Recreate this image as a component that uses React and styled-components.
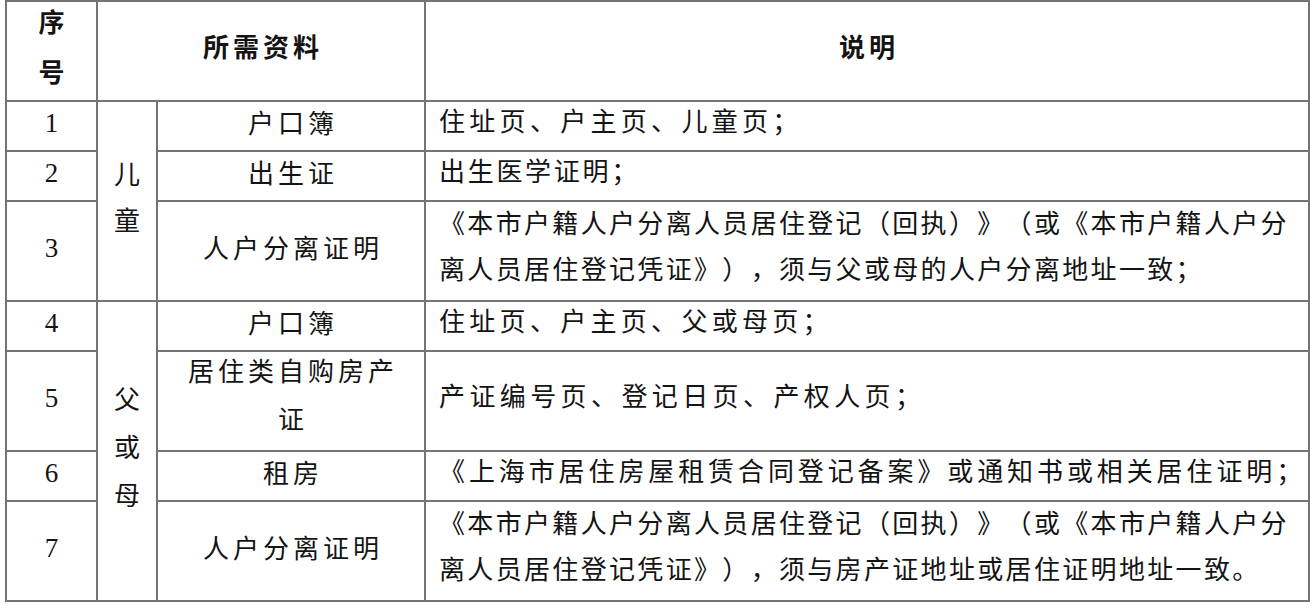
import React from 'react';
import styled, { createGlobalStyle } from 'styled-components';

const GlobalStyle = createGlobalStyle`
    html, body {
        margin: 0;
        padding: 0;
        background: #ffffff;
    }
    body {
        font-family: "Noto Sans CJK SC", "Noto Sans", sans-serif;
        color: #141414;
        text-spacing-trim: space-all;
    }
`;

const Page = styled.div`
    width: 1315px;
    height: 608px;
    box-sizing: border-box;
    padding-left: 5px;
    background: #ffffff;
`;

// lines of the table are the grid background showing through the gaps
const Sheet = styled.div`
    display: grid;
    grid-template-columns: 89px 58px 266px 882px;
    grid-template-rows: 98px 48px 48px 98px 48px 98px 48px 98px;
    gap: 2px;
    padding: 2px;
    width: fit-content;
    background: #747474;
`;

const Cell = styled.div`
    background: #ffffff;
    display: flex;
    align-items: center;
    justify-content: center;
    text-align: center;
    box-sizing: border-box;
    grid-column: ${p => (p.$cols ? `span ${p.$cols}` : 'auto')};
    grid-row: ${p => (p.$rows ? `span ${p.$rows}` : 'auto')};
`;

const HeadCell = styled(Cell)`
    font-family: "Noto Sans CJK SC", sans-serif;
    font-weight: 700;
    font-size: 26px;
    line-height: 50px;
    letter-spacing: 4px;
    padding-left: 4px;
    padding-bottom: 11px;
`;

const NumCell = styled(Cell)`
    font-family: "Liberation Serif", "Times New Roman", serif;
    font-size: 27px;
    padding-bottom: 5px;
`;

const GroupCell = styled(Cell)`
    font-size: 26px;
    line-height: ${p => p.$lh || 46}px;
    padding-bottom: 10px;
`;

const ItemCell = styled(Cell)`
    font-size: 26px;
    line-height: 48px;
    letter-spacing: 4px;
    padding-left: 4px;
    padding-bottom: ${p => (p.$tall ? 14 : 8)}px;
`;

const DescCell = styled(Cell)`
    justify-content: flex-start;
    text-align: left;
    padding-left: 13px;
    padding-bottom: 12px;
    font-size: 26px;
    line-height: 46px;
    letter-spacing: ${p => p.$spacing}px;
    white-space: nowrap;
`;

const rows = [
    { no: 1, item: '户口簿', desc: ['住址页、户主页、儿童页；'], spacing: 4.3 },
    { no: 2, item: '出生证', desc: ['出生医学证明；'], spacing: 2.7 },
    {
        no: 3,
        item: '人户分离证明',
        desc: [
            '《本市户籍人户分离人员居住登记（回执）》（或《本市户籍人户分',
            '离人员居住登记凭证》），须与父或母的人户分离地址一致；',
        ],
        spacing: 2.33,
    },
    { no: 4, item: '户口簿', desc: ['住址页、户主页、父或母页；'], spacing: 4.3 },
    {
        no: 5,
        item: ['居住类自购房产', '证'],
        desc: ['产证编号页、登记日页、产权人页；'],
        spacing: 4.4,
    },
    {
        no: 6,
        item: '租房',
        desc: ['《上海市居住房屋租赁合同登记备案》或通知书或相关居住证明；'],
        spacing: 3.9,
    },
    {
        no: 7,
        item: '人户分离证明',
        desc: [
            '《本市户籍人户分离人员居住登记（回执）》（或《本市户籍人户分',
            '离人员居住登记凭证》），须与房产证地址或居住证明地址一致。',
        ],
        spacing: 2.33,
    },
];

const Lines = ({ list }) => (
    <div>
        {list.map((line, i) => (
            <div key={i}>{line}</div>
        ))}
    </div>
);

export default function App() {
    return (
        <>
            <GlobalStyle />
            <Page>
                <Sheet>
                    <HeadCell>
                        <Lines list={['序', '号']} />
                    </HeadCell>
                    <HeadCell $cols={2}>所需资料</HeadCell>
                    <HeadCell>说明</HeadCell>

                    {rows.map(row => (
                        <React.Fragment key={row.no}>
                            <NumCell>{row.no}</NumCell>
                            {row.no === 1 && (
                                <GroupCell $rows={3}>
                                    <Lines list={['儿', '童']} />
                                </GroupCell>
                            )}
                            {row.no === 4 && (
                                <GroupCell $rows={4} $lh={48}>
                                    <Lines list={['父', '或', '母']} />
                                </GroupCell>
                            )}
                            <ItemCell $tall={Array.isArray(row.item)}>
                                {Array.isArray(row.item) ? <Lines list={row.item} /> : row.item}
                            </ItemCell>
                            <DescCell $spacing={row.spacing}>
                                <Lines list={row.desc} />
                            </DescCell>
                        </React.Fragment>
                    ))}
                </Sheet>
            </Page>
        </>
    );
}
